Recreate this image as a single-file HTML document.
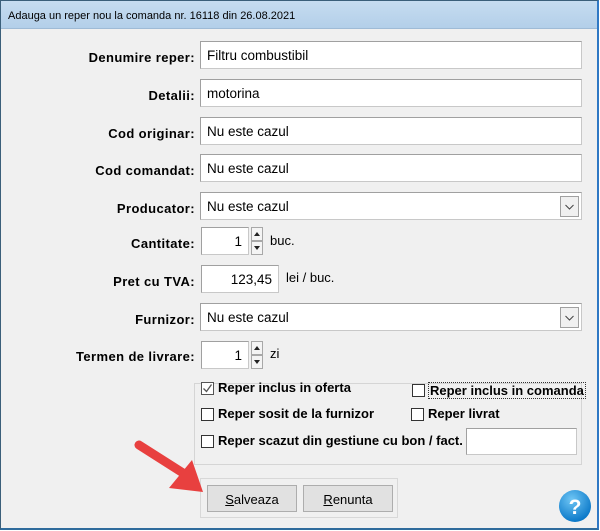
<!DOCTYPE html>
<html><head><style>
*{box-sizing:border-box;margin:0;padding:0}
body{width:600px;height:531px;background:#fff;position:relative;overflow:hidden;font-family:"Liberation Sans",Arial,sans-serif;font-size:12px;color:#000}
.win{position:absolute;left:0;top:0;width:599px;height:530px;border:1px solid #3b5f7a;background:#f0f0f0;border-right:2px solid #2f78c4;border-bottom:2px solid #2f6b9c}
.title{position:absolute;left:0;top:0;right:0;height:28px;background:linear-gradient(#c6dcf0,#b3cfe9);font-size:11px;padding:9px 0 0 7px;color:#000;border-bottom:1px solid #9fbbd6}
.lbl{position:absolute;right:405px;font-weight:bold;font-size:13px;letter-spacing:0.4px;text-align:right;white-space:nowrap}
.in{position:absolute;background:#fff;border:1px solid #7a7a7a;border-color:#a0a0a0 #c8c8c8 #c8c8c8 #a0a0a0;padding:6px 0 0 6px;font-size:13.5px;white-space:nowrap}
.cb{position:absolute;width:13px;height:13px;background:#fff;border:1px solid #333}
.ct{position:absolute;font-weight:bold;font-size:13px;white-space:nowrap}
.sp{position:absolute;width:12px;border:1px solid #a8a8a8;background:#f4f4f4}
.dd{position:absolute;width:19px;height:21px;border:1px solid #a0a0a0;background:#f0f0f0;top:3px;right:2px}
.btn{position:absolute;height:27px;border:1px solid #adadad;background:#e1e1e1;text-align:center;padding-top:6px;font-size:13px}
</style></head><body>
<div class="win">
<div class="title">Adauga un reper nou la comanda nr. 16118 din 26.08.2021</div>
</div>
<div class="lbl" style="top:50px">Denumire reper:</div>
<div class="in" style="left:200px;top:41px;width:382px;height:28px">Filtru combustibil</div>
<div class="lbl" style="top:88px">Detalii:</div>
<div class="in" style="left:200px;top:79px;width:382px;height:28px">motorina</div>
<div class="lbl" style="top:126px">Cod originar:</div>
<div class="in" style="left:200px;top:117px;width:382px;height:28px">Nu este cazul</div>
<div class="lbl" style="top:163px">Cod comandat:</div>
<div class="in" style="left:200px;top:154px;width:382px;height:28px">Nu este cazul</div>
<div class="lbl" style="top:201px">Producator:</div>
<div class="in" style="left:200px;top:192px;width:382px;height:28px">Nu este cazul<div class="dd"><svg width="17" height="19"><path d="M4.5 8l4 4 4-4" fill="none" stroke="#444" stroke-width="1"/></svg></div></div>
<div class="lbl" style="top:236px">Cantitate:</div>
<div class="in" style="left:201px;top:227px;width:48px;height:28px;text-align:right;padding-right:6px">1</div>
<div class="sp" style="left:251px;top:227px;height:14px"><svg width="10" height="12"><path d="M2 8h6L5 4z" fill="#222"/></svg></div>
<div class="sp" style="left:251px;top:241px;height:14px"><svg width="10" height="12"><path d="M2 4h6L5 8z" fill="#222"/></svg></div>
<div class="ct" style="left:270px;top:233px;font-weight:normal">buc.</div>
<div class="lbl" style="top:274px">Pret cu TVA:</div>
<div class="in" style="left:201px;top:265px;width:78px;height:28px;text-align:right;padding-right:6px">123,45</div>
<div class="ct" style="left:286px;top:270px;font-weight:normal">lei / buc.</div>
<div class="lbl" style="top:312px">Furnizor:</div>
<div class="in" style="left:200px;top:303px;width:382px;height:28px">Nu este cazul<div class="dd"><svg width="17" height="19"><path d="M4.5 8l4 4 4-4" fill="none" stroke="#444" stroke-width="1"/></svg></div></div>
<div class="lbl" style="top:349px">Termen de livrare:</div>
<div class="in" style="left:201px;top:341px;width:48px;height:28px;text-align:right;padding-right:6px">1</div>
<div class="sp" style="left:251px;top:341px;height:14px"><svg width="10" height="12"><path d="M2 8h6L5 4z" fill="#222"/></svg></div>
<div class="sp" style="left:251px;top:355px;height:14px"><svg width="10" height="12"><path d="M2 4h6L5 8z" fill="#222"/></svg></div>
<div class="ct" style="left:270px;top:346px;font-weight:normal">zi</div>

<div style="position:absolute;left:194px;top:383px;width:388px;height:82px;border:1px solid #d5d5d5"></div>
<div class="cb" style="left:201px;top:382px;border-color:#555"><svg width="11" height="11" style="position:absolute;left:0;top:0"><path d="M1.5 5.5l3 3 5-7" fill="none" stroke="#555" stroke-width="1.3"/></svg></div>
<div class="ct" style="left:218px;top:380px">Reper inclus in oferta</div>
<div class="cb" style="left:412px;top:384px"></div>
<div class="ct" style="left:428px;top:382px;border:1px dotted #333;padding:0 1px">Reper inclus in comanda</div>
<div class="cb" style="left:201px;top:408px"></div>
<div class="ct" style="left:218px;top:406px">Reper sosit de la furnizor</div>
<div class="cb" style="left:411px;top:408px"></div>
<div class="ct" style="left:428px;top:406px">Reper livrat</div>
<div class="cb" style="left:201px;top:435px"></div>
<div class="ct" style="left:218px;top:433px">Reper scazut din gestiune cu bon / fact.</div>
<div class="in" style="left:466px;top:428px;width:111px;height:27px"></div>

<div style="position:absolute;left:200px;top:478px;width:198px;height:40px;border:1px solid #d8d8d8"></div>
<div class="btn" style="left:207px;top:485px;width:90px"><u>S</u>alveaza</div>
<div class="btn" style="left:303px;top:485px;width:90px"><u>R</u>enunta</div>

<svg style="position:absolute;left:557px;top:489px" width="36" height="36"><defs><radialGradient id="g" cx="40%" cy="30%" r="70%"><stop offset="0" stop-color="#6fc6f5"/><stop offset="1" stop-color="#0a78c8"/></radialGradient></defs><circle cx="18" cy="17" r="16" fill="url(#g)"/><text x="18" y="25" font-family="Liberation Sans" font-weight="bold" font-size="21" fill="#fff" text-anchor="middle">?</text></svg>

<svg style="position:absolute;left:125px;top:430px" width="90" height="75"><path d="M14 15 L58 43" stroke="#e8403f" stroke-width="9" stroke-linecap="round"/><path d="M44 58 L78 62 L67 30 Z" fill="#e8403f"/></svg>
</body></html>
